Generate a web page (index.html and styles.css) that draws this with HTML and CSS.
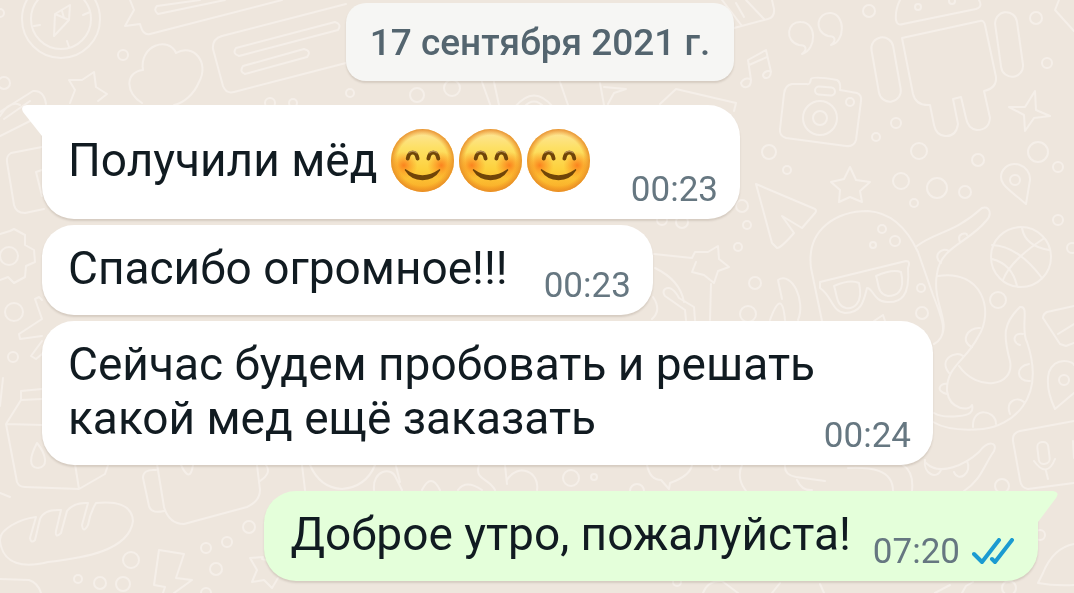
FILE: index.html
```html
<!DOCTYPE html>
<html lang="ru">
<head>
    <meta charset="UTF-8">
    <meta name="viewport" content="width=device-width, initial-scale=1.0">
    <title>Чат</title>
    <link rel="stylesheet" href="styles.css">
</head>
<body>
    <!-- wallpaper -->
    <svg class="wallpaper" viewBox="0 0 1074 593" preserveAspectRatio="xMidYMid slice" aria-hidden="true">
        <!-- compass -->
        <circle cx="61" cy="19" r="39"/>
        <circle cx="61" cy="19" r="30"/>
        <path d="M54 36 L55 14 L70 5 L69 20 Z M55 14 L69 20 M62 11 L64 18 M34 26 l6 -1 M83 15 l7 -3 M67 41 l2 6"/>
        <!-- speech bubbles and cards -->
        <path d="M130 0 L134 10 L125 26 L140 24 Q143 36 150 34 L282 0"/>
        <path d="M200 0 L157 6 Q153 10 158 14 L225 0"/>
        <path d="M346 4 L222 36 Q212 39 213 49 L223 86 Q226 94 234 92 L346 63"/>
        <path d="M236 48 L335 22 Q342 24 338 30 L239 56 Q232 54 236 48 Z M243 66 L304 49 Q312 51 307 57 L245 74 Q239 72 243 66 Z"/>
        <path d="M20 105 Q10 100 0 116 M0 112 L33 91 Q44 90 46 104 M0 136 L40 116 M4 119 L30 101"/>
        <path d="M42 147 L11 153 Q6 156 7 162 L14 205 Q16 213 25 213 L44 209 M42 170 L36 172 L42 196"/>
        <!-- cloud -->
        <path d="M142 103 C126 94 124 72 143 70 C139 45 169 36 176 53 C193 43 210 62 199 82 C194 94 184 103 174 105"/>
        <path d="M70 103 L75 90 L69 80 L82 80 L94 72 L96 87 L107 94 L98 101"/>
        <path d="M482 82 L495 118 M494 82 L499 105 M515 107 Q534 84 553 107 M524 107 Q534 96 544 107 M560 82 L568 105 M600 83 L604 105 M604 87 L626 89 L614 93 L608 104 M660 104 L676 89 L736 103 L734 111"/>
        <path d="M734 28 L768 19 Q775 17 774 9 L772 0 M722 0 L742 26 M736 3 L744 17 M746 0 L764 19"/>
        <!-- quotes -->
        <path d="M802 54 C808 49 806 45 799 45 C784 41 787 21 801 22 C817 22 817 49 802 54 Z M831 45 C837 40 835 36 828 36 C813 31 817 12 831 13 C846 15 845 42 831 45 Z"/>
        <!-- notes -->
        <path d="M751 80 L748 60 L766 50 L771 72 M749 65 L767 57 M751 80 C751 89 742 89 741 83 C744 77 750 78 751 80 M771 72 C770 80 763 79 763 75 C764 71 769 70 771 72"/>
        <!-- camera -->
        <path d="M792 84 L807 84 Q810 85 811 79 Q813 76 837 80 Q841 82 840 90 L857 93 Q862 95 861 101 L856 140 Q854 147 846 146 L786 138 Q779 136 780 129 L784 94 Q785 85 792 84 Z"/>
        <rect x="815" y="87" width="20" height="8" rx="4" transform="rotate(5 825 91)"/>
        <circle cx="820" cy="118" r="17"/><circle cx="820" cy="118" r="7"/><circle cx="850" cy="102" r="4"/>
        <!-- robot -->
        <path d="M900 0 Q895 10 896 20 Q897 26 903 24 L976 9 Q983 7 979 0"/>
        <circle cx="918" cy="7" r="3"/><circle cx="952" cy="1" r="3"/>
        <path d="M902 38 L980 21 Q984 20 985 25 L996 77 Q997 88 984 91 L990 118 Q989 130 977 130 Q968 129 966 118 L961 97 L953 99 L958 124 Q956 137 945 136 Q936 135 934 125 L930 105 Q916 106 913 94 Z"/>
        <rect x="875" y="37" width="22" height="65" rx="11" transform="rotate(-10 886 69)"/>
        <rect x="998" y="12" width="22" height="65" rx="11" transform="rotate(-8 1009 44)"/>
        <path d="M1009 107 L1025 107 L1035 91 L1036 110 L1050 116 L1034 118 L1025 131 L1024 115 Z"/>
        <path d="M1059 0 L1055 10 L1074 31"/>
        <path d="M850 167 L856 180 L870 182 L860 191 L862 202 L850 197 L839 202 L840 190 L831 182 L844 179 Z"/>
        <path d="M756 184 L815 209 Q817 211 815 213 L802 228 L782 216 L794 233 Q781 248 777 248 L772 243 Z"/>
        <!-- pins -->
        <path d="M1026 204 C1010 190 997 184 1002 172 C1010 157 1031 165 1030 180 Z"/>
        <circle cx="1015" cy="180" r="5"/>
        <path d="M1055 409 Q1045 388 1049 372 C1056 355 1074 362 1074 365 M1055 409 L1074 393"/>
        <circle cx="1064" cy="380" r="5"/>
        <!-- octopus -->
        <path d="M822 321 L811 268 C806 228 838 211 868 211 C898 213 912 239 918 252 L933 295 C943 320 949 336 934 344 M917 246 C937 231 953 234 982 208 C989 205 993 214 986 221 C968 243 940 247 937 274 C932 300 949 320 942 335 M938 276 C982 269 995 311 978 337 C966 361 946 366 947 391 C950 411 970 411 972 405 Q975 415 959 416 Q942 418 934 413 M959 366 C977 392 1015 387 1010 361 C1003 335 1003 323 1020 307 C1030 305 1020 329 1027 342 C1047 401 1010 426 983 429 Q950 432 933 422"/>
        <path d="M820 282 L906 261 Q911 261 908 268 C910 296 901 303 887 302 C874 302 873 288 867 288 C864 300 862 313 845 313 C831 311 833 297 820 288 Z"/>
        <path d="M834 286 Q850 279 859 283 C864 305 852 309 846 308 C836 306 837 294 834 286 Z M876 276 Q892 269 901 272 C906 293 895 296 888 296 C877 294 879 284 876 276 Z"/>
        <path d="M941 263 C932 257 941 246 949 251 M960 242 C956 233 967 232 967 235 M972 347 C960 342 967 327 980 328 M949 373 C938 359 956 350 963 356 M947 394 C934 391 941 382 947 384 M1020 345 C1011 342 1014 332 1023 334 M1030 381 C1016 382 1015 366 1029 364 M1010 414 C1005 401 1017 396 1024 402 M973 427 C972 406 996 410 996 424"/>
        <circle cx="882" cy="229" r="4"/><circle cx="895" cy="241" r="5"/><circle cx="873" cy="245" r="3"/><circle cx="921" cy="288" r="4"/><circle cx="922" cy="313" r="6"/>
        <!-- ball -->
        <circle cx="1021" cy="257" r="30"/>
        <path d="M1003 280 Q1010 261 1043 239 M992 245 Q1018 246 1042 278 M1022 228 Q1025 246 1049 250 M992 259 Q1012 264 1017 286"/>
        <!-- star wand and leaf -->
        <path d="M654 254 L692 258 L695 252 L708 252 L718 246 L719 259 L729 267 L718 271 L714 283 L704 275 L692 272 L696 262 M711 284 L710 320"/>
        <path d="M655 268 Q680 280 684 302 M653 297 Q662 310 652 319 M665 289 Q672 285 679 298 L694 307 L695 320 M665 289 Q662 292 665 296 L685 310 L686 320"/>
        <path d="M770 320 Q782 287 785 320 M782 299 L778 280 C792 271 806 301 798 320 M874 321 L883 315 L885 321"/>
        <path d="M1074 306 L1047 312 Q1043 314 1043 318 L1060 344 L1066 346 L1074 343 M1058 334 L1074 324"/>
        <!-- gear and sparkle -->
        <path d="M0 234 L10 231 L14 229 L25 235 L25 245 L34 250 L35 262 L26 266 L25 277 L14 283 L8 277 L0 280"/>
        <circle cx="9" cy="256" r="9"/><circle cx="14" cy="312" r="9"/><circle cx="13" cy="357" r="5"/>
        <path d="M42 300 L39 297 L35 299 L42 319 L19 334 L20 339 L42 336 M42 341 L31 356 L36 359 L42 354"/>
        <!-- milk -->
        <path d="M42 389 L21 391 L21 400 L42 399 M21 400 L6 424 L17 482 Q19 487 25 487 L79 489 L105 474 L108 465 M79 489 L75 464 M6 424 L42 425 M37 443 C30 456 28 468 38 468 C49 467 46 454 37 443 Z M0 406 L3 378"/>
        <!-- bread -->
        <path d="M36 517 C20 519 -1 529 0 541 C3 565 24 568 48 562 C83 558 129 551 133 521 C132 504 115 501 96 503 Q90 513 88 525 Q83 534 82 525 L88 503 Q74 502 67 511 L61 533 Q55 539 56 531 L61 510 Q44 509 40 519 L35 540 Q31 544 30 538 Z"/>
        <path d="M0 579 L29 580 Q38 583 41 593 M0 493 L10 497"/>
        <!-- kettle -->
        <path d="M157 464 L164 507 Q169 524 184 524 L247 507 Q260 501 260 490 L257 465 M156 470 Q143 469 143 478 L149 506 Q151 514 164 511 M266 465 Q272 473 260 481 M181 465 Q190 484 193 465"/>
        <!-- fruit and clouds -->
        <path d="M302 465 L305 490 M310 465 Q320 488 342 489 Q366 487 375 465 M374 490 C372 470 392 466 396 478 L402 490 M396 466 L400 482 M422 490 Q431 472 440 490 M458 490 Q466 479 482 490 M479 465 C474 480 489 478 495 490 M505 465 L507 484 M507 480 C518 462 540 472 537 490"/>
        <path d="M647 465 Q650 480 661 480 L669 489 L670 483 Q690 476 692 465 M742 465 Q736 478 746 491 M785 465 Q784 475 796 477 L825 481 M797 480 Q802 491 812 490 M848 468 C870 467 893 469 893 491 M903 465 Q914 472 912 491"/>
        <!-- bolt and star -->
        <path d="M159 550 L184 554 L176 578 L192 580 L174 593 M159 550 L154 585 L165 587 L163 593"/>
        <path d="M267 560 L262 559 L263 557 L250 558 L257 570 L252 582 L264 580 L272 588 L278 578"/>
        <path d="M703 593 Q708 580 722 581 L738 593 M772 593 L780 583 M820 584 L824 593 M935 593 L950 585 M962 593 L966 586 L973 582"/>
        <!-- lower right tentacle and microphone card -->
        <path d="M926 463 C940 477 966 464 979 452 C988 440 998 442 994 451 C983 467 981 480 964 491"/>
        <path d="M925 460 C923 474 937 480 941 470 M954 472 C958 483 973 473 967 461"/>
        <path d="M1074 421 L1020 431 Q1012 433 1013 441 L1020 480 Q1021 488 1028 489 L1074 483"/>
        <rect x="1038" y="442" width="11" height="22" rx="5" transform="rotate(-7 1043 453)"/>
        <path d="M1034 461 Q1047 479 1055 459 M1046 471 L1048 479 M1073 441 L1074 458"/>
        <path d="M1074 544 Q1053 548 1043 573 L1038 583 Q1054 586 1074 585"/>
        <!-- loose dots -->
        <g>
            <circle cx="123" cy="55" r="5"/><circle cx="4" cy="83" r="6"/><circle cx="0" cy="13" r="4"/>
            <circle cx="350" cy="93" r="4"/><circle cx="417" cy="95" r="7"/><circle cx="452" cy="88" r="8"/>
            <circle cx="270" cy="103" r="5"/><circle cx="293" cy="103" r="4"/>
            <circle cx="869" cy="11" r="6"/><circle cx="1036" cy="18" r="6"/><circle cx="1047" cy="63" r="5"/>
            <circle cx="896" cy="123" r="5"/><circle cx="876" cy="137" r="4"/><circle cx="919" cy="151" r="8"/>
            <circle cx="978" cy="160" r="6"/><circle cx="1038" cy="152" r="10"/><circle cx="1058" cy="167" r="5"/>
            <circle cx="769" cy="152" r="7"/><circle cx="787" cy="170" r="4"/><circle cx="901" cy="181" r="8"/>
            <circle cx="937" cy="188" r="10"/><circle cx="965" cy="192" r="6"/><circle cx="914" cy="203" r="4"/>
            <circle cx="742" cy="206" r="6"/><circle cx="747" cy="225" r="4"/><circle cx="738" cy="247" r="4"/>
            <circle cx="755" cy="283" r="6"/><circle cx="748" cy="314" r="8"/><circle cx="1058" cy="220" r="5"/>
            <circle cx="1072" cy="248" r="5"/><circle cx="998" cy="300" r="8"/><circle cx="662" cy="220" r="5"/><circle cx="682" cy="222" r="6"/>
            <circle cx="249" cy="527" r="6"/><circle cx="227" cy="542" r="5"/><circle cx="206" cy="548" r="5"/>
            <circle cx="216" cy="569" r="6"/><circle cx="131" cy="560" r="8"/><circle cx="78" cy="579" r="4"/>
            <circle cx="100" cy="583" r="6"/><circle cx="123" cy="584" r="7"/><circle cx="206" cy="593" r="5"/>
            <circle cx="571" cy="478" r="8"/><circle cx="594" cy="477" r="3"/><circle cx="637" cy="491" r="7"/>
            <circle cx="716" cy="466" r="4"/><circle cx="1002" cy="486" r="7"/><circle cx="1009" cy="588" r="7"/>
            <circle cx="677" cy="582" r="4"/><circle cx="1040" cy="535" r="5"/>
        </g>
    </svg>

    <!-- shared shapes -->
    <svg class="defs" width="0" height="0" aria-hidden="true">
        <defs>
            <linearGradient id="face" x1="0" y1="0" x2="0" y2="1">
                <stop offset="0" stop-color="#fde6a0"/>
                <stop offset="0.3" stop-color="#fde065"/>
                <stop offset="0.65" stop-color="#fdd03c"/>
                <stop offset="1" stop-color="#f9a826"/>
            </linearGradient>
            <radialGradient id="rim">
                <stop offset="0.8" stop-color="#f08a1c" stop-opacity="0"/>
                <stop offset="1" stop-color="#e58a28" stop-opacity="0.9"/>
            </radialGradient>
            <radialGradient id="blush">
                <stop offset="0" stop-color="#fb7a1a" stop-opacity="0.9"/>
                <stop offset="1" stop-color="#fb8c1a" stop-opacity="0"/>
            </radialGradient>
            <symbol id="smile" viewBox="0 0 64 64">
                <circle cx="32" cy="32" r="32" fill="url(#face)"/>
                <circle cx="13" cy="37" r="14" fill="url(#blush)"/>
                <circle cx="51" cy="37" r="14" fill="url(#blush)"/>
                <circle cx="32" cy="32" r="32" fill="url(#rim)"/>
                <path d="M17 30 Q18 24 22 24 Q26 24 27 30 M38 30 Q39 24 43 24 Q47 24 48 30" fill="none" stroke="#704508" stroke-width="4" stroke-linecap="round"/>
                <path d="M18 24 Q22 21 26 24 M39 24 Q43 21 47 24" fill="none" stroke="#b08a50" stroke-width="1.5" stroke-linecap="round"/>
                <path d="M15 41 Q32 53 49 41 Q50 40 50 42 Q44 52 32 52 Q20 52 14 42 Q14 40 15 41 Z" fill="#704508"/>
            </symbol>
        </defs>
    </svg>

    <main class="chat">
        <time class="date" datetime="2021-09-17">17 сентября 2021 г.</time>

        <article class="message in first">
            <svg class="tail" viewBox="0 0 20 31" aria-hidden="true"><path d="M20 0 H5 Q-2 1 1 7 L20 31 Z"/></svg>
            <p class="text with-emoji">Получили мёд
                <span class="emoji-row" role="img" aria-label="Три улыбки"><svg class="emoji"><use href="#smile"/></svg><svg class="emoji"><use href="#smile"/></svg><svg class="emoji"><use href="#smile"/></svg></span>
            </p>
            <div class="meta"><time>00:23</time></div>
        </article>

        <article class="message in">
            <p class="text">Спасибо огромное!!!</p>
            <div class="meta"><time>00:23</time></div>
        </article>

        <article class="message in long">
            <p class="text">Сейчас будем пробовать и решать какой мед ещё заказать</p>
            <div class="meta"><time>00:24</time></div>
        </article>

        <article class="message out">
            <svg class="tail" viewBox="0 0 20 31" aria-hidden="true"><path d="M0 0 H15 Q22 1 18 7 L0 31 Z"/></svg>
            <p class="text">Доброе утро, пожалуйста!</p>
            <div class="meta">
                <time>07:20</time>
                <svg class="ticks" viewBox="0 0 42 28" role="img" aria-label="Прочитано"><path d="M2 16 L10 24 L27 2 M20 21 L23 24 L40 2"/></svg>
            </div>
        </article>
    </main>
</body>
</html>
```
FILE: styles.css
```css
:root {
    --wall: #eee6dd;
    --doodle: #f5efe9;
    --bubble-in: #ffffff;
    --bubble-out: #e4ffda;
    --text: #111b21;
    --muted: #667781;
    --date-text: #54656f;
    --tick: #1b9bd1;
    --shadow: 0 2px 2px rgba(90, 70, 50, 0.16);
}

* {
    margin: 0;
    padding: 0;
    box-sizing: border-box;
}

body {
    position: relative;
    min-height: 100vh;
    overflow-x: hidden;
    background: var(--wall);
    color: var(--text);
    font-family: Roboto, "Noto Sans", sans-serif;
}

.wallpaper {
    position: fixed;
    inset: 0;
    z-index: -1;
    width: 100%;
    height: 100%;
    fill: none;
    stroke: var(--doodle);
    stroke-width: 2;
    stroke-linecap: round;
    stroke-linejoin: round;
}

.defs {
    position: absolute;
}

.chat {
    display: flex;
    flex-direction: column;
    align-items: flex-start;
    gap: 6px;
    padding: 3px 36px 12px 42px;
}

.date {
    align-self: center;
    margin-bottom: 18px;
    padding: 18px 24px 16px;
    border-radius: 20px;
    background: #f6f6f4;
    box-shadow: var(--shadow);
    color: var(--date-text);
    font-size: 37px;
    font-weight: 500;
    line-height: 44px;
}

.message {
    position: relative;
    display: flex;
    align-items: flex-end;
    justify-content: space-between;
    gap: 36px;
    padding: 0 22px 9px 26px;
    border-radius: 32px;
    background: var(--bubble-in);
    box-shadow: var(--shadow);
}

.first {
    border-top-left-radius: 0;
}

.long {
    gap: 4px;
    max-width: calc(100% - 105px);
}

.out {
    align-self: flex-end;
    gap: 22px;
    margin-top: 20px;
    padding-right: 24px;
    border-top-right-radius: 0;
    background: var(--bubble-out);
}

.tail {
    position: absolute;
    top: 0;
    right: 100%;
    width: 20px;
    height: 31px;
    fill: var(--bubble-in);
}

.out .tail {
    right: auto;
    left: 100%;
    fill: var(--bubble-out);
}

.text {
    padding: 16px 0 11px;
    font-size: 46px;
    line-height: 54px;
}

.with-emoji {
    line-height: 78px;
}

.emoji-row {
    display: inline-flex;
    gap: 5px;
    margin: 0 5px 0 2px;
    vertical-align: -16px;
}

.emoji {
    width: 63px;
    height: 63px;
}

.meta {
    display: flex;
    align-items: center;
    gap: 12px;
    color: var(--muted);
    font-size: 35px;
    line-height: 40px;
}

.ticks {
    width: 42px;
    height: 28px;
    fill: none;
    stroke: var(--tick);
    stroke-width: 4;
    stroke-linecap: round;
    stroke-linejoin: round;
}
```
